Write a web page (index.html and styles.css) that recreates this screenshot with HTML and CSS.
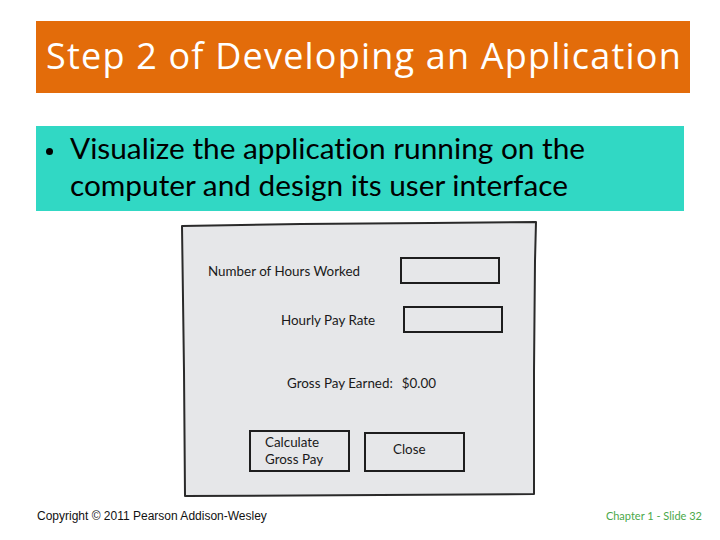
FILE: index.html
```html
<!DOCTYPE html>
<html>
<head>
<meta charset="utf-8">
<link rel="stylesheet" href="styles.css">
</head>
<body>
<div class="slide">
  <div class="title">Step 2 of Developing an Application</div>
  <div class="bullets">
    <div class="bullet"><span class="dot"></span><span class="btext">Visualize the application running on the computer and design its user interface</span></div>
  </div>
  <div class="sketch">
    <svg class="frame" width="357" height="278" viewBox="0 0 357 278">
      <path d="M1 5 L120 3 L250 2 L355 1 L354 40 L353 150 L353 273 L200 274 L4 275 L3 150 Z" fill="#e6e7e9" stroke="#2a2a2a" stroke-width="2" stroke-linejoin="round"/>
    </svg>
    <div class="row row1"><span class="lbl">Number of Hours Worked</span><span class="box"></span></div>
    <div class="row row2"><span class="lbl">Hourly Pay Rate</span><span class="box"></span></div>
    <div class="row row3"><span class="lbl">Gross Pay Earned:</span><span class="val">$0.00</span></div>
    <div class="row row4"><span class="btn calc">Calculate<br>Gross Pay</span><span class="btn close">Close</span></div>
  </div>
  <div class="footer">
    <span class="copy">Copyright © 2011 Pearson Addison-Wesley</span>
    <span class="slideno">Chapter 1 - Slide 32</span>
  </div>
</div>
</body>
</html>
```
FILE: styles.css
```css
html, body { margin: 0; padding: 0; background: #fff; }
.slide { width: 720px; height: 540px; position: relative; overflow: hidden; }
.title {
  margin: 21px 0 0 36px; width: 644px; height: 72px; padding-left: 10px;
  background: #e36c0a; color: #fff;
  font-family: "Open Sans", Lato, sans-serif; font-size: 36px; line-height: 69px;
  white-space: nowrap; font-variant-ligatures: none; letter-spacing: 1.2px;
}
.bullets {
  margin: 33px 0 0 36px; width: 648px; height: 85px; background: #31d8c4;
  box-sizing: border-box; padding: 3px 0 0 10px;
  font-family: Lato, "Open Sans", sans-serif; font-size: 29.8px; line-height: 37px; color: #000;
  font-variant-ligatures: none;
}
.bullet { display: flex; }
.dot { width: 24px; flex: none; position: relative; }
.dot::before {
  content: ""; position: absolute; left: 0; top: 19px; width: 7px; height: 7px;
  border-radius: 50%; background: #000;
}
.btext { width: 590px; }
.sketch {
  position: relative;
  margin: 11px 0 0 182px; width: 355px; height: 275px; box-sizing: border-box;
  padding: 2px;
  font-family: Lato, "DejaVu Sans", sans-serif; font-size: 13.4px; color: #1a1a1a;
}
.frame { position: absolute; left: -1px; top: -1px; z-index: 0; }
.row { display: flex; align-items: center; position: relative; z-index: 1; }
.lbl { display: block; white-space: nowrap; }
.box { display: block; width: 96px; height: 23px; border: 2px solid #1e1e1e; }
.row1 { margin-top: 33px; padding-left: 24px; }
.row1 .lbl { width: 192px; }
.row2 { margin-top: 22px; padding-left: 97px; }
.row2 .lbl { width: 122px; }
.row3 { margin-top: 42px; padding-left: 103px; }
.val { margin-left: 9px; }
.row4 { margin-top: 39px; padding-left: 65px; align-items: flex-start; }
.btn { display: block; box-sizing: border-box; border: 2px solid #1e1e1e; }
.calc { width: 101px; height: 42px; padding: 2px 0 0 14px; line-height: 17px; }
.close { width: 101px; height: 40px; margin-left: 14px; margin-top: 2px; padding: 7px 0 0 27px; }
.footer {
  display: flex; justify-content: space-between; align-items: baseline;
  margin: 12px 0 0 37px; width: 665px;
}
.copy { font-family: "Liberation Sans", Arial, sans-serif; font-size: 12px; color: #111; }
.slideno { font-family: Lato, "Open Sans", sans-serif; font-size: 11px; color: #4aa84a; }
```
